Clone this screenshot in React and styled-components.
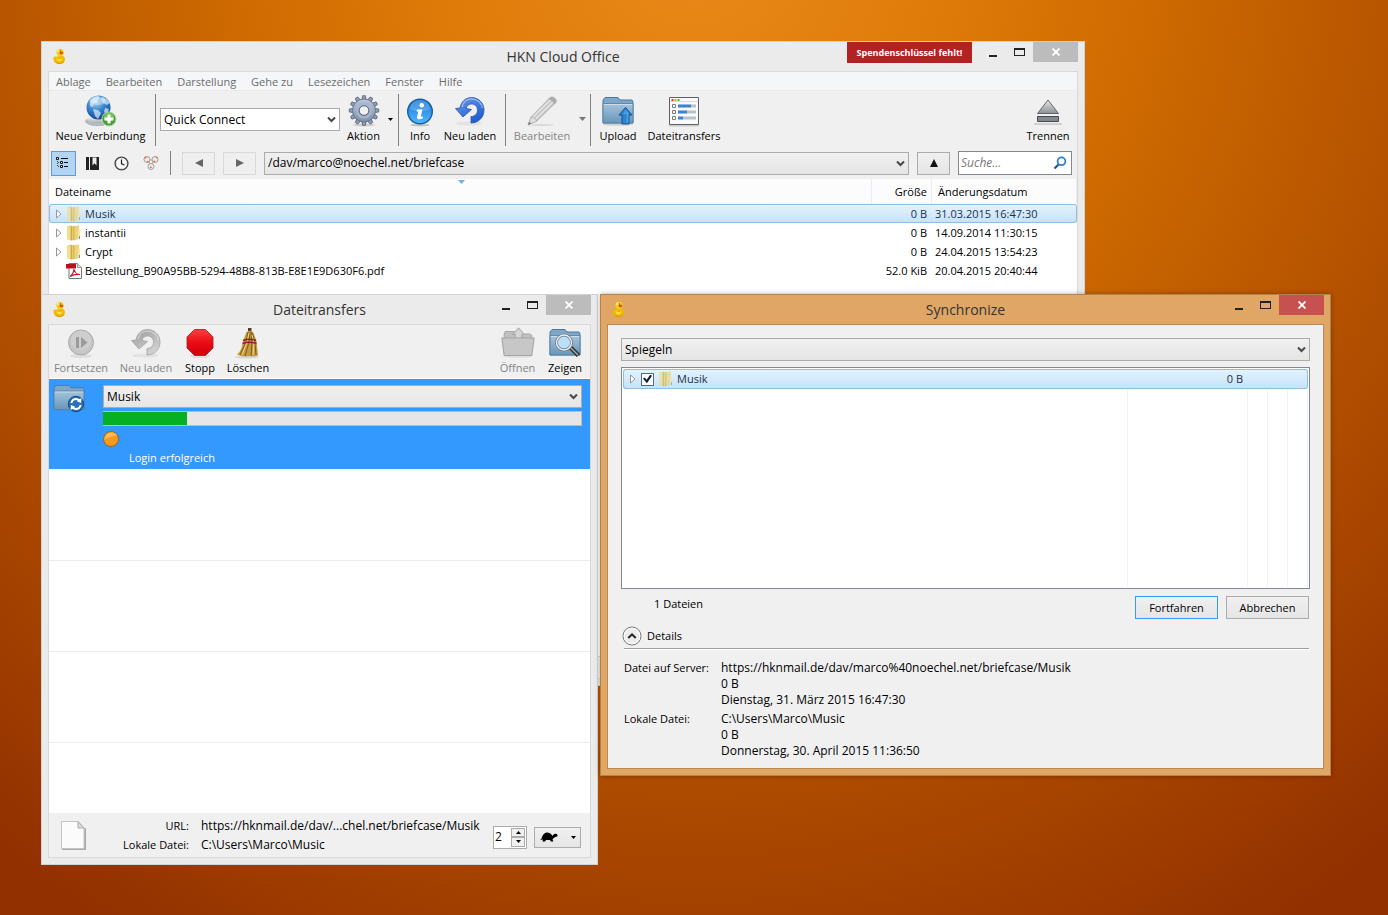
import React, { useState } from 'react'
import styled, { createGlobalStyle, css } from 'styled-components';

const GlobalStyle = createGlobalStyle`
  * {
    box-sizing: border-box;
  }
  html, body, #root {
    height: 100%;
    margin: 0;
  }
  body, button, input, select {
    font-family: 'Open Sans', 'Noto Sans', sans-serif;
    font-size: 12px;
    line-height: 16px;
    color: #000;
  }
  svg {
    display: block;
    flex: none;
  }
`

const Desktop = styled.main`
  position: relative;
  min-height: 100%;
  overflow: hidden;
  background: radial-gradient(ellipse 1100px 1160px at 50% -6%, #ea8a1a 0%, #de7a08 24%, #cd6900 43%, #b25000 68%, #923000 100%);
`

/* ---- window frame ---- */

const WindowFrame = styled.section`
  position: absolute;
  display: flex;
  flex-direction: column;
  padding: 0 6px 6px;
  background: ${props => props.$active ? '#e0a665' : '#ebebeb'};
  border: 1px solid ${props => props.$active ? '#b5834a' : '#d2d2d2'};
  box-shadow: ${props => props.$active ? '0 0 5px rgba(0, 0, 0, .3)' : 'none'};
`;

const MainFrame = styled(WindowFrame)`
  top: 41px;
  left: 41px;
  right: 303px;
  min-height: 645px;
`

const TransferFrame = styled(WindowFrame)`
  top: 294px;
  left: 41px;
  width: 557px;
  bottom: 50px;
`

const SyncFrame = styled(WindowFrame)`
  top: 294px;
  left: 600px;
  right: 57px;
`

const TitleBar = styled.header`
  display: grid;
  grid-template-columns: 1fr auto 1fr;
  height: 29px;
`

const TitleIcon = styled.div`
  padding: 6px 4px;
`

const Title = styled.h1`
  margin: 0;
  font-size: 14px;
  line-height: 29px;
  font-weight: 400;
  color: #333;
`

const Caption = styled.div`
  display: flex;
  justify-content: flex-end;
  align-items: flex-start;
`

const KeyNotice = styled.button`
  width: 125px;
  height: 21px;
  padding: 0;
  margin-right: 7px;
  border: 0;
  background: #b22222;
  color: #fff;
  font-size: 9px;
  font-weight: 700;
`

const CaptionButton = styled.button`
  display: flex;
  align-items: center;
  justify-content: center;
  width: 27px;
  height: 21px;
  padding: 0;
  border: 0;
  background: transparent;
`

const CloseButton = styled(CaptionButton)`
  width: 45px;
  height: 20px;
  background: ${props => props.$active ? '#c75050' : '#bcbcbc'};
`

const Content = styled.div`
  flex: 1;
  display: flex;
  flex-direction: column;
  min-height: 0;
  background: #f0f0f0;
  border: 1px solid ${props => props.$active ? '#b98a52' : '#d9d9d9'};
`

/* ---- shared controls ---- */

const ComboBox = styled.div`
  display: grid;
  flex: ${props => props.$width ? 'none' : '1'};
  width: ${props => props.$width || 'auto'};
  min-width: 0;
  height: 23px;
  align-items: center;
  > * {
    grid-area: 1 / 1;
  }
  > svg {
    justify-self: end;
    margin-right: 4px;
    pointer-events: none;
  }
  select {
    width: 100%;
    height: 23px;
    padding: 0 20px 0 3px;
    appearance: none;
    border: 1px solid #acacac;
    border-radius: 0;
    background: ${props => props.$white ? '#fff' : 'linear-gradient(#f0f0f0, #e5e5e5)'};
  }
`

const PushButton = styled.button`
  display: flex;
  align-items: center;
  justify-content: center;
  width: ${props => props.$width};
  height: 23px;
  padding: 0;
  border: 1px solid ${props => props.$primary ? '#3399ff' : '#acacac'};
  background: linear-gradient(#f0f0f0, #e5e5e5);
  font-size: 11px;
  &:disabled {
    border-color: #d9d9d9;
    background: #efefef;
  }
`

const ToolButton = styled.button`
  display: flex;
  flex-direction: column;
  align-items: center;
  gap: 1px;
  width: ${props => props.$width};
  padding: 1px 0 0;
  border: 0;
  background: transparent;
  font-size: 11px;
  white-space: nowrap;
  span {
    margin: 0 -10px;
  }
  &:disabled {
    color: #838383;
  }
`

const DropButton = styled.button`
  display: flex;
  align-items: center;
  justify-content: center;
  width: 16px;
  height: 50px;
  padding: 0;
  border: 0;
  background: transparent;
`

const Spacer = styled.div`
  flex: 1;
`

const Divider = styled.div`
  width: 1px;
  height: ${props => props.$height};
  background: #808080;
  margin: ${props => props.$margin};
`

/* ---- browser window ---- */

const MenuBar = styled.nav`
  display: flex;
  gap: 15px;
  height: 19px;
  padding: 0 7px;
  background: #f5f6f7;
  border-bottom: 1px solid #e8e9ea;
  button {
    padding: 0;
    border: 0;
    background: transparent;
    font-size: 11px;
    line-height: 20px;
    color: #6d6d6d;
  }
`

const ToolBar = styled.div`
  display: flex;
  align-items: flex-start;
  height: 59px;
  padding: 3px 0 0 1px;
`

const QuickConnect = styled.div`
  padding: 14px 5px 0 0;
`

const NavBar = styled.div`
  display: flex;
  align-items: center;
  height: 29px;
  padding: 0 5px 3px 2px;
`

const ViewButton = styled.button`
  display: flex;
  align-items: center;
  justify-content: center;
  width: 25px;
  height: 25px;
  margin-right: 4px;
  padding: 0;
  border: 1px solid ${props => props.$on ? '#569de5' : 'transparent'};
  background: ${props => props.$on ? '#b4d5f2' : 'transparent'};
`

const NavGroup = styled.div`
  display: flex;
  flex: ${props => props.$grow ? '1' : 'none'};
  align-items: center;
  gap: 8px;
`

const SearchField = styled.label`
  display: flex;
  align-items: center;
  width: 114px;
  height: 24px;
  padding: 0 4px 0 2px;
  border: 1px solid #828790;
  background: #fff;
  input {
    flex: 1;
    min-width: 0;
    padding: 0;
    border: 0;
    outline: 0;
  }
  input::placeholder {
    color: #7a7a7a;
    font-style: italic;
  }
`

const ListArea = styled.div`
  flex: 1;
  display: flex;
  min-height: 470px;
  background: #fff;
`

const selectedCell = css`
  background: linear-gradient(#e4f2fb, #c5e3fc);
  border-top: 1px solid #8fbfe2;
  border-bottom: 1px solid #8fbfe2;
  color: #1f2f45;
  &:first-child {
    border-left: 1px solid #8fbfe2;
    border-radius: 3px 0 0 3px;
  }
  &:last-child {
    border-right: 1px solid #8fbfe2;
    border-radius: 0 3px 3px 0;
  }
`

const FileTable = styled.table`
  width: 100%;
  height: 100%;
  table-layout: fixed;
  border-collapse: separate;
  border-spacing: 0;
  font-size: 11px;
  th, td {
    padding: 0;
    text-align: left;
    font-weight: 400;
    white-space: nowrap;
  }
`

const HeadCell = styled.th`
  height: 25px;
  background: #fcfcfc;
  border-right: 1px solid #e5eef8;
`

const HeadLabel = styled.div`
  display: flex;
  flex-direction: column;
  justify-content: center;
  height: 25px;
  padding: 0 4px 0 6px;
  text-align: ${props => props.$align || 'left'};
`

const SortMark = styled.span`
  display: block;
  align-self: center;
  height: 0;
  svg {
    position: relative;
    top: -4px;
  }
`

const Cell = styled.td`
  height: ${props => props.$tall ? '20px' : '19px'};
  &:first-child {
    border-left: 1px solid transparent;
  }
  ${props => props.$selected && selectedCell}
`

const CellBody = styled.div`
  display: flex;
  align-items: center;
  gap: 3px;
  height: 16px;
  padding: ${props => props.$pad || '0 4px 0 5px'};
  justify-content: ${props => props.$align || 'flex-start'};
`

const FillCell = styled.td`
  border-right: 1px solid #eaf2fb;
`

const StatusBar = styled.footer`
  height: 22px;
  border-top: 1px solid #d7d7d7;
`

/* ---- transfer window ---- */

const TransferTools = styled.div`
  display: flex;
  align-items: flex-start;
  height: 54px;
  padding: 1px 0 0;
  border-bottom: 1px solid #fff;
`

const TransferList = styled.ul`
  flex: 1;
  margin: 0;
  padding: 0;
  overflow: hidden;
  list-style: none;
  background: #fff;
`

const TransferItem = styled.li`
  display: grid;
  grid-template-columns: 46px 1fr;
  column-gap: 8px;
  height: 91px;
  padding: 6px 8px 0 0;
  background: ${props => props.$active ? '#3399ff' : '#fff'};
  border-bottom: 1px solid ${props => props.$active ? '#fff' : '#ececec'};
  > svg {
    margin-left: 4px;
  }
`

const TransferBody = styled.div`
  display: flex;
  flex-direction: column;
  align-items: stretch;
`

const Progress = styled.div`
  height: 15px;
  margin: 3px 0 5px;
  border: 1px solid #bcbcbc;
  border-left: 0;
  background: #e6e6e6;
`

const ProgressBar = styled.div`
  height: 100%;
  background: #06b025;
`

const TransferState = styled.p`
  margin: 3px 0 0 26px;
  font-size: 11px;
  color: #fff;
`

const TransferFooter = styled.footer`
  display: flex;
  align-items: center;
  height: 44px;
  padding: 0 9px 0 12px;
`

const FooterInfo = styled.dl`
  flex: 1;
  display: grid;
  grid-template-columns: 103px 1fr;
  column-gap: 12px;
  margin: 0;
  line-height: 19px;
  white-space: nowrap;
  dt {
    font-size: 11px;
    text-align: right;
  }
  dd {
    margin: 0;
  }
`

const Spinner = styled.div`
  display: flex;
  width: 34px;
  height: 23px;
  margin: 4px 7px 0 0;
  padding: 1px;
  border: 1px solid #acacac;
  background: #fff;
  input {
    flex: 1;
    min-width: 0;
    padding: 0;
    border: 0;
    outline: 0;
    appearance: textfield;
  }
  div {
    display: flex;
    flex-direction: column;
    width: 14px;
  }
  button {
    flex: 1;
    display: flex;
    align-items: center;
    justify-content: center;
    padding: 0;
    border: 1px solid #acacac;
    background: #f0f0f0;
  }
`

const SpeedButton = styled(PushButton)`
  justify-content: space-between;
  height: 21px;
  margin-top: 4px;
  padding: 0 4px 0 5px;
`

/* ---- synchronize window ---- */

const SyncBody = styled.div`
  display: flex;
  flex-direction: column;
  padding: 13px 13px 10px;
`

const SyncTree = styled.div`
  height: 222px;
  margin-top: 6px;
  padding: 1px;
  border: 1px solid #828790;
  background: #fff;
`

const CheckBox = styled.input`
  display: grid;
  place-content: center;
  width: 13px;
  height: 13px;
  margin: 0 1px;
  appearance: none;
  border: 1px solid #5c6874;
  background: #fff;
  &:checked::after {
    content: '';
    width: 9px;
    height: 9px;
    background: #0e2236;
    clip-path: polygon(0 45%, 18% 32%, 40% 58%, 80% 2%, 100% 14%, 44% 96%);
  }
`

const SyncActions = styled.div`
  display: flex;
  gap: 8px;
  padding: 7px 1px 0 33px;
  font-size: 11px;
  p {
    flex: 1;
    margin: 0;
  }
`

const DetailsToggle = styled.button`
  display: flex;
  align-items: center;
  gap: 5px;
  margin-top: 5px;
  padding: 0 0 0 1px;
  height: 24px;
  border: 0;
  background: transparent;
  font-size: 11px;
`

const Rule = styled.hr`
  margin: 0 1px 10px 3px;
  border: 0;
  border-top: 1px solid #a0a0a0;
  border-bottom: 1px solid #fff;
`

const DetailsList = styled.dl`
  display: grid;
  grid-template-columns: 85px 1fr;
  gap: 4px 12px;
  margin: 0 0 0 3px;
  dt {
    font-size: 11px;
    white-space: nowrap;
  }
  dd {
    margin: 0;
  }
  p {
    margin: 0;
    line-height: 16px;
  }
  p:last-child {
    line-height: 15px;
  }
`

/* ---- icons ---- */

const Duck = () => (
  <svg width="16" height="16" viewBox="0 0 16 16">
    <path d="M2 8.500c1.200.300 2.200.500 3.300.100L9.500 7.500c2.500.300 3.500 1.800 3.400 4C12.800 14.500 10.500 15.700 7.300 15.700 3.900 15.700 2 14.300 1.600 12c-.200-1.500-.100-2.700.400-3.500z" fill="#f3b900" />
    <path d="M4.500 10c1.600 1.600 4 1.500 6 .2-.3 2.100-1.800 3.200-3.600 3.100C5.500 13.200 4.600 12 4.500 10z" fill="#fbe14a" />
    <circle cx="8" cy="4.400" r="3.600" fill="#f9cf17" />
    <path d="M3 13.500c2 2 7 2 9.300-.3-.8 2-2.700 2.600-5 2.600-2 0-3.500-.8-4.300-2.300z" fill="#d48c00" />
    <ellipse cx="6.800" cy="2.800" rx="1.800" ry="1.300" fill="#fdec7c" />
    <path d="M7.500 4.300 10 3.600l1.500 1.200-1.400 1.600-2.400-.5z" fill="#e8481c" />
    <circle cx="8.300" cy="3" r=".7" fill="#5b3a00" />
  </svg>
)

const Globe = () => (
  <svg width="32" height="32" viewBox="0 0 32 32">
    <defs>
      <radialGradient id="globe" cx=".4" cy=".25" r=".8">
        <stop offset="0" stopColor="#b8dcf5" /><stop offset=".45" stopColor="#3f8ad0" /><stop offset="1" stopColor="#0a3f8f" />
      </radialGradient>
      <linearGradient id="stand" x2="0" y2="1">
        <stop offset="0" stopColor="#fafafa" /><stop offset="1" stopColor="#8b9094" />
      </linearGradient>
    </defs>
    <ellipse cx="13" cy="26" rx="12.500" ry="5" fill="url(#stand)" />
    <path d="M1 24c4 5 17 6 23 1l1 2c-5 5-20 6-25 0z" fill="#b5babe" />
    <circle cx="13.500" cy="12.500" r="12" fill="url(#globe)" />
    <path d="M5 6c2-3 5-4.500 8-5l2 2-3 2 1 2-4 1-1 4-3-1zM17 2c4 1 6 3 8 6l-3 2-4-2-2-3zM8 14l5 1 3 3-3 6-3-3zM20 13l4 1-2 6-3-3z" fill="#dceefa" opacity=".7" />
    <ellipse cx="13" cy="6" rx="8" ry="4" fill="#fff" opacity=".3" />
    <circle cx="24" cy="24" r="7" fill="#459c35" stroke="#b3ddb0" />
    <circle cx="24" cy="22" r="5" fill="#8bca70" opacity=".7" />
    <path d="M24 19.500v9M19.500 24h9" stroke="#fff" strokeWidth="3" />
  </svg>
)

const Gear = () => (
  <svg width="32" height="32" viewBox="0 0 32 32">
    <defs>
      <linearGradient id="gear" x2="0" y2="1">
        <stop offset="0" stopColor="#b9c6db" /><stop offset="1" stopColor="#8090ab" />
      </linearGradient>
    </defs>
    <ellipse cx="16" cy="30" rx="11" ry="1.500" fill="#ccc" />
    <g fill="#8f9db6" stroke="#48566d" strokeWidth=".7">
      {[0, 30, 60, 90, 120, 150, 180, 210, 240, 270, 300, 330].map(a => (
        <path key={a} d="M13.800 5 14.600.700h2.800L18.200 5z" transform={`rotate(${a} 16 15.500)`} />
      ))}
    </g>
    <circle cx="16" cy="15.500" r="11.500" fill="url(#gear)" stroke="#5b6a83" strokeWidth=".8" />
    <circle cx="16" cy="15.500" r="7" fill="none" stroke="#a7b5cd" strokeWidth="2" />
    <circle cx="16" cy="15.500" r="4.800" fill="#f0f0f0" stroke="#56637a" />
  </svg>
)

const Info = () => (
  <svg width="32" height="32" viewBox="0 0 32 32">
    <defs>
      <linearGradient id="info" x2="0" y2="1">
        <stop offset="0" stopColor="#1877d3" /><stop offset="1" stopColor="#51b6fd" />
      </linearGradient>
    </defs>
    <ellipse cx="16" cy="30" rx="10" ry="1.500" fill="#c4c4c4" />
    <circle cx="16" cy="16.500" r="12.300" fill="url(#info)" stroke="#175da5" strokeWidth="1.400" />
    <path d="M6 14c1-6 5-9 10-9s9 3 10 9c-6 3-14 3-20 0z" fill="#fff" opacity=".18" />
    <circle cx="17.700" cy="10.300" r="2.200" fill="#fff" />
    <path d="M13 14.500h5.500l-1.800 7.200 2.300-.2-.5 2c-2.500 1.200-6 1.400-5.400-1.700l1.200-5.300h-1.800z" fill="#fff" />
  </svg>
)

const Reload = ({ gray }) => (
  <svg width="32" height="32" viewBox="0 0 32 32">
    <defs>
      <linearGradient id={gray ? 'reloadGray' : 'reload'} x2=".6" y2="1">
        <stop offset="0" stopColor={gray ? '#999' : '#6a9aea'} /><stop offset="1" stopColor={gray ? '#d2d2d2' : '#1f5fd0'} />
      </linearGradient>
    </defs>
    <ellipse cx="15" cy="28.500" rx="13" ry="2" fill="#e2e2e2" />
    <path d="M1.500 13.500 6 13C7 7 11.500 2.500 17.500 2.500 24.500 2.500 30 8 30 15c0 7.500-5.500 13-13 13v-6.500c4 0 6.500-2.700 6.500-6.300 0-3.700-2.600-6.200-6-6.200-2.800 0-4.700 1.500-5.300 4.500l5.300 1L9 22z"
      fill={`url(#${gray ? 'reloadGray' : 'reload'})`} stroke={gray ? '#a2a2a2' : '#2654ae'} strokeWidth=".8" />
    <path d="M8 12c1-5 5-8 9.500-8C23 4 28 8 28.500 13" fill="none" stroke="#fff" opacity=".4" strokeWidth="1.500" />
  </svg>
)

const Pencil = () => (
  <svg width="32" height="32" viewBox="0 0 32 32">
    <ellipse cx="16" cy="30" rx="12" ry="1" fill="#dadada" />
    <path d="M2 30 5 22 24 2.500c2.500-2 7.500 1.500 6 5L11 26z" fill="#c6c6c6" stroke="#aaa" strokeWidth=".7" />
    <path d="M7 22 26 3.500M9 24.500 29 5" stroke="#e6e6e6" strokeWidth="1.500" />
    <path d="M22 4.500c3 0 5.500 2 6 5l2-2c1.500-3.500-3.500-7-6-5z" fill="#aaa" />
    <path d="M5 22c3 .5 5 2 6 4l-9 4z" fill="#dedede" stroke="#aaa" strokeWidth=".6" />
    <path d="m2 30 1.200-3.200 2.200 1.700z" fill="#777" />
  </svg>
)

const FolderShape = ({ id }) => (
  <>
    <defs>
      <linearGradient id={id} x2="0" y2="1">
        <stop offset="0" stopColor="#a5c4dc" /><stop offset="1" stopColor="#6796ba" />
      </linearGradient>
    </defs>
    <path d="M1 28V5l2-2.500h13L18 5h12l1 2v21z" fill="#7ea7c7" stroke="#4c789e" />
    <path d="M1 8.500h30V28H1z" fill={`url(#${id})`} stroke="#5685ab" />
    <path d="M1.800 9.400h28.400" stroke="#fff" opacity=".5" />
  </>
)

const UploadFolder = () => (
  <svg width="32" height="32" viewBox="0 0 32 32">
    <ellipse cx="16" cy="29.500" rx="15" ry="1.500" fill="#d2d2d2" />
    <FolderShape id="uploadFolder" />
    <path d="m23.500 12.500 6.500 7.500h-3v9h-7v-9h-3z" fill="#2c83d0" stroke="#154f8d" />
    <path d="m23.500 14.500 3 3.500v10h-2v-9h-3.500z" fill="#5fb0ee" opacity=".6" />
  </svg>
)

const TransfersIcon = () => (
  <svg width="32" height="32" viewBox="0 0 32 32">
    <path d="M1 30.500h30" stroke="#ccc" strokeWidth="2" />
    <path d="M1.500 2.500h29v27h-29z" fill="#fafafa" stroke="#5c6267" />
    <path d="M2 6.500h28" stroke="#d8d8d8" />
    <path d="M3.500 5h2" stroke="#d8362a" strokeWidth="2" />
    <path d="M6.500 5h2" stroke="#e79a23" strokeWidth="2" />
    <path d="M9.500 5h2" stroke="#58a93c" strokeWidth="2" />
    {[9, 15, 21].map((y, i) => (
      <g key={y}>
        <path d={`M4.500 ${y + .5}h3v3h-3z`} fill="#fff" stroke="#777c82" />
        <path d={`M10 ${y + 2}h18`} stroke="#b9c1ca" strokeWidth="4" />
        <path d={`M10 ${y + 2}h${[13, 9, 5][i]}`} stroke="#3f82cf" strokeWidth="4" />
        <path d={`M10 ${y + .5}h18M10 ${y + 3.5}h18`} stroke="#fff" opacity=".45" />
      </g>
    ))}
  </svg>
)

const Eject = () => (
  <svg width="32" height="32" viewBox="0 0 32 32">
    <defs>
      <linearGradient id="eject" x2="0" y2="1">
        <stop offset="0" stopColor="#e8e8ea" /><stop offset="1" stopColor="#8d9095" />
      </linearGradient>
    </defs>
    <path d="M2 29h28" stroke="#d0d0d0" strokeWidth="2" />
    <path d="M16 5 26.500 18.500h-21z" fill="url(#eject)" stroke="#55585e" strokeWidth=".9" />
    <path d="M5.500 21.500h21v5h-21z" fill="#85888e" stroke="#45484e" />
  </svg>
)

const Chevron = () => (
  <svg width="9" height="7" viewBox="0 0 9 7">
    <path d="m1 1.500 3.500 3.500L8 1.500" fill="none" stroke="#484848" strokeWidth="2" />
  </svg>
)

const Caret = ({ up, wide, color = '#000' }) => (
  <svg width={wide ? 7 : 5} height={wide ? 4 : 3} viewBox="0 0 5 3" preserveAspectRatio="none">
    <path d={up ? 'M0 3 2.500 0 5 3z' : 'M0 0h5L2.500 3z'} fill={color} />
  </svg>
)

const Triangle = ({ dir, color }) => (
  <svg width="10" height="10" viewBox="0 0 10 10">
    <path d={{ left: 'M9 1v8L1 5z', right: 'M1 1v8l8-4z', up: 'M1 9h8L5 1z' }[dir]} fill={color} />
  </svg>
)

const OutlineIcon = () => (
  <svg width="15" height="14" viewBox="0 0 15 14">
    <path d="M1.500 3v8M2 6.500h2M2 10.500h2" fill="none" stroke="#444" strokeDasharray="1 1" />
    <path d="M.500 1.500h2v2h-2zM4.500 5.500h2v2h-2zM4.500 9.500h2v2h-2z" fill="#fff" stroke="#111" />
    <path d="M5 2.500h7M8 6.500h4M8 10.500h4" stroke="#111" />
  </svg>
)

const BookmarkIcon = () => (
  <svg width="15" height="15" viewBox="0 0 15 15">
    <path d="M1 1h3v13H1zM5 1h9v13H5z" fill="#222" />
    <path d="M7.500 1.500h4v8l-2-2.300-2 2.300z" fill="#eee" />
  </svg>
)

const ClockIcon = () => (
  <svg width="15" height="15" viewBox="0 0 15 15">
    <circle cx="7.500" cy="7.500" r="6.400" fill="#f7f7f7" stroke="#444" strokeWidth="1.400" />
    <path d="M7.500 3.500v4.300l3 1.200" fill="none" stroke="#222" strokeWidth="1.200" />
    <path d="M7.500 1.500v1.200M7.500 12.300v1.200M1.500 7.500h1.200M12.300 7.500h1.200" stroke="#999" />
  </svg>
)

const BonjourIcon = () => (
  <svg width="16" height="16" viewBox="0 0 16 16">
    <g fill="#ececec" stroke="#a79e98">
      <circle cx="4" cy="4.500" r="3" />
      <circle cx="12" cy="4.500" r="3" />
      <circle cx="8" cy="11.500" r="3" />
      <path d="m6 7 1 2M10 7 9 9M6.500 5h3" fill="none" />
    </g>
    <path d="m1 2 2.500-.5L3 4zM10 6l2.500-.5-1 2zM6.500 13l1.500-2 1 2z" fill="#ee6b24" />
    <path d="m13 2 1.500 1M4 6.500l1.500.5" stroke="#ee6b24" strokeWidth="1.500" />
  </svg>
)

const Magnifier = () => (
  <svg width="14" height="14" viewBox="0 0 14 14">
    <path d="M1.500 12.500 5.500 8.500" stroke="#2a4c9e" strokeWidth="2.200" />
    <circle cx="8.500" cy="5.300" r="3.900" fill="#fff" stroke="#2f7fcd" strokeWidth="1.800" />
  </svg>
)

const Expander = () => (
  <svg width="8" height="10" viewBox="0 0 8 10">
    <path d="M1.500 1v8L6 5z" fill="#fff" stroke="#979797" />
  </svg>
)

const YellowFolder = ({ dim }) => (
  <svg width="16" height="16" viewBox="0 0 16 16" opacity={dim ? .7 : 1}>
    <path d="M1 1.500 5.500.500 8 2v13l-3 .5-4-1.500z" fill="#e6cc70" />
    <path d="M1 1.500 4 2.500V15l-3-1z" fill="#f2df8f" />
    <path d="M5 1.500 6 1v14l-1 .500z" fill="#cdaa4a" />
    <path d="M7 1 13 .500V14l-5.500 1.500H7z" fill="#ecd47a" />
    <path d="M7 1h1.500v14H7z" fill="#d9b95a" />
    <path d="M12 4.500h2v9.500l-2 .500z" fill="#f5e6a0" />
    <path d="M13.500 11v3" stroke="#4aa3df" />
  </svg>
)

const PdfIcon = () => (
  <svg width="16" height="16" viewBox="0 0 16 16">
    <path d="M3 .500h8.500l4 4v11H3z" fill="#fff" stroke="#777" />
    <path d="M11.500.500v4h4" fill="#ddd" stroke="#999" />
    <path d="M0 1h10v4.500H0z" fill="#b5121b" />
    <path d="M4 13.500c2-1 4.200-5 4-7.500.500 3 3 5.500 6 5.500-3-.500-7 .200-10 2z" fill="none" stroke="#c11a22" strokeWidth="1.200" />
  </svg>
)

const PlayPause = () => (
  <svg width="32" height="32" viewBox="0 0 32 32">
    <ellipse cx="16" cy="29" rx="11" ry="2" fill="#ddd" />
    <circle cx="16" cy="15.500" r="12.500" fill="#c6c6c6" stroke="#a8a8a8" />
    <circle cx="16" cy="13.500" r="10" fill="#d3d3d3" opacity=".6" />
    <path d="M11 10h3v11h-3zM16 10v11l6.500-5.500z" fill="#9b9b9b" />
  </svg>
)

const StopSign = () => (
  <svg width="32" height="32" viewBox="0 0 32 32">
    <defs>
      <linearGradient id="stop" x2="0" y2="1">
        <stop offset="0" stopColor="#ff4040" /><stop offset=".5" stopColor="#e90c14" /><stop offset="1" stopColor="#cf0009" />
      </linearGradient>
    </defs>
    <ellipse cx="16" cy="29" rx="10" ry="2" fill="#ddd" />
    <path d="M10.500 2.500h11l7.500 7.500v11l-7.500 7.500h-11L3 21V10z" fill="url(#stop)" stroke="#a8161a" strokeWidth=".8" />
  </svg>
)

const Broom = () => (
  <svg width="32" height="32" viewBox="0 0 32 32">
    <ellipse cx="15" cy="30" rx="12" ry="1.500" fill="#d5d5d5" />
    <path d="M16 1h3.500v6H16z" fill="#5a3b22" />
    <path d="M14 6c2-3 6-3 7.500 0l3 8 1.500 14.500c-3 1-6 1-8 .5-4 1-9 .5-13-1.500 4-3 5-8 6-13.500z" fill="#c69a40" />
    <path d="M16 5 14 15 8 28M18 5l-1 10-4 14M19 5l1 11-1 13M20.500 6 23 16l1 12" fill="none" stroke="#76541b" strokeWidth=".9" />
    <path d="M17 6l-2 9-5 13M20 8l2 8-1 12" fill="none" stroke="#efd58a" />
    <path d="M11 13.500c4-1.500 9-1.500 13 0M10.500 16.500c4-1.500 10-1.500 14 0" fill="none" stroke="#8f2323" strokeWidth="1.500" />
  </svg>
)

const OpenFolder = () => (
  <svg width="34" height="32" viewBox="0 0 32 32" preserveAspectRatio="none">
    <ellipse cx="16" cy="29.500" rx="13" ry="1.500" fill="#ddd" />
    <path d="M3 12V7l1-2.500h8L13 7h14l2 2v4z" fill="#c0c0c0" stroke="#aaa" />
    <path d="m16.500 1 5.500 6.500h-2.500V14h-6V7.500H11z" fill="#d6d6d6" stroke="#aaa" />
    <path d="M.8 11h30.400L29 28.500H3z" fill="#c7c7c7" stroke="#a4a4a4" />
  </svg>
)

const ShowFolder = () => (
  <svg width="32" height="32" viewBox="0 0 32 32">
    <FolderShape id="showFolder" />
    <path d="m20 19 9.500 9.500" stroke="#333" strokeWidth="4.500" />
    <path d="m20 19 9 9" stroke="#aaa" strokeWidth="1.500" />
    <circle cx="15" cy="15.500" r="7.500" fill="#b8e0f8" stroke="#6c747b" strokeWidth="2.800" />
    <circle cx="15" cy="15.500" r="7.500" fill="none" stroke="#e9edef" strokeWidth="1.500" />
  </svg>
)

const SyncFolder = () => (
  <svg width="32" height="28" viewBox="0 2 32 28">
    <g transform="scale(1 .95)">
      <FolderShape id="syncFolder" />
    </g>
    <circle cx="23" cy="21" r="7.700" fill="#2870b8" stroke="#184c87" />
    <path d="M18.300 20c.7-2.800 2.700-4 4.700-4 1.500 0 2.500.500 3.500 1.500M27.700 22c-.7 2.800-2.700 4-4.700 4-1.500 0-2.500-.500-3.500-1.500" fill="none" stroke="#fff" strokeWidth="2" />
    <path d="m28.500 15-.5 5-4.500-2zM17.500 27l.5-5 4.500 2z" fill="#fff" />
  </svg>
)

const StatusBall = () => (
  <svg width="16" height="16" viewBox="0 0 16 16">
    <circle cx="8" cy="8" r="7.500" fill="#f79a1e" stroke="#a3661b" />
    <path d="M1.500 9C2 4.500 5 1.500 8.500 1.500c2.500 0 4.500 1 5.500 3C10 5 5 6 1.500 9z" fill="#fcbd5b" />
  </svg>
)

const PaperIcon = () => (
  <svg width="25" height="29" viewBox="0 0 25 29">
    <path d="M1 28h23V7" fill="none" stroke="#aaa" strokeWidth="2" />
    <path d="M.500.500h16.500L23 7v20.500H.500z" fill="#fbfbfb" stroke="#c3c3c3" />
    <path d="M17 .500V7h6z" fill="#ddd" stroke="#aaa" />
  </svg>
)

const Turtle = () => (
  <svg width="18" height="10" viewBox="0 0 18 10">
    <path d="M0 8c1-.5 1.500-1 2-3 1-3 3-4.500 5-4.500 2.500 0 4.500 1.500 5.500 3.500l1-1.500c1-1 3.500-.8 4 .5.300 1.200-.5 2-2 2-1 0-1.500 1.500-3 2l.8 2.500h-2.500L10 8H6L5 9.500H2.500L3 7.500z" fill="#000" />
  </svg>
)

const UpDisc = () => (
  <svg width="20" height="20" viewBox="0 0 20 20">
    <circle cx="10" cy="10" r="9" fill="#ececec" stroke="#777" />
    <circle cx="10" cy="10" r="7.800" fill="none" stroke="#fff" />
    <path d="m6.300 12 3.700-3.700 3.700 3.700" fill="none" stroke="#222" strokeWidth="2" />
  </svg>
)

/* ---- building blocks ---- */

const WindowTitle = ({ title, active, children }) => (
  <TitleBar>
    <TitleIcon><Duck /></TitleIcon>
    <Title>{title}</Title>
    <Caption>
      {children}
      <CaptionButton aria-label="Minimieren">
        <svg width="8" height="15" viewBox="0 0 8 15"><path d="M0 10h8v2H0z" fill="#222" /></svg>
      </CaptionButton>
      <CaptionButton aria-label="Maximieren">
        <svg width="11" height="9" viewBox="0 0 11 9"><path d="M0 0h11v8H0zM1 2v5h9V2z" fill="#222" fillRule="evenodd" /></svg>
      </CaptionButton>
      <CloseButton $active={active} aria-label="Schließen">
        <svg width="8" height="8" viewBox="0 0 8 8"><path d="m.500.500 7 7M7.500.500l-7 7" stroke="#fff" strokeWidth="1.800" /></svg>
      </CloseButton>
    </Caption>
  </TitleBar>
)

const Combo = ({ label, options, ...rest }) => (
  <ComboBox {...rest}>
    <select aria-label={label}>
      {options.map(option => <option key={option}>{option}</option>)}
    </select>
    <Chevron />
  </ComboBox>
)

const Tool = ({ icon, label, width, disabled }) => (
  <ToolButton $width={width} disabled={disabled}>
    {icon}
    <span>{label}</span>
  </ToolButton>
)

const menus = ['Ablage', 'Bearbeiten', 'Darstellung', 'Gehe zu', 'Lesezeichen', 'Fenster', 'Hilfe']

const files = [
  { name: 'Musik', size: '0 B', date: '31.03.2015 16:47:30', folder: true },
  { name: 'instantii', size: '0 B', date: '14.09.2014 11:30:15', folder: true },
  { name: 'Crypt', size: '0 B', date: '24.04.2015 13:54:23', folder: true },
  { name: 'Bestellung_B90A95BB-5294-48B8-813B-E8E1E9D630F6.pdf', size: '52.0 KiB', date: '20.04.2015 20:40:44' },
]

const BrowserWindow = () => {
  const [selected, setSelected] = useState('Musik')
  return (
    <MainFrame>
      <WindowTitle title="HKN Cloud Office">
        <KeyNotice>Spendenschlüssel fehlt!</KeyNotice>
      </WindowTitle>
      <Content>
        <MenuBar>
          {menus.map(menu => <button key={menu}>{menu}</button>)}
        </MenuBar>
        <ToolBar>
          <Tool icon={<Globe />} label="Neue Verbindung" width="101px" />
          <Divider $height="52px" $margin="0 4px" />
          <QuickConnect>
            <Combo label="Quick Connect" options={['Quick Connect']} $width="180px" $white />
          </QuickConnect>
          <Tool icon={<Gear />} label="Aktion" width="37px" />
          <DropButton aria-label="Aktion Menü"><Caret /></DropButton>
          <Divider $height="52px" $margin="0 4px 0 0" />
          <Tool icon={<Info />} label="Info" width="34px" />
          <Tool icon={<Reload />} label="Neu laden" width="66px" />
          <Divider $height="52px" $margin="0 4px 0 2px" />
          <Tool icon={<Pencil />} label="Bearbeiten" width="64px" disabled />
          <DropButton aria-label="Bearbeiten Menü" disabled><Caret wide color="#777" /></DropButton>
          <Divider $height="52px" $margin="0 5px 0 0" />
          <Tool icon={<UploadFolder />} label="Upload" width="44px" />
          <Tool icon={<TransfersIcon />} label="Dateitransfers" width="88px" />
          <Spacer />
          <Tool icon={<Eject />} label="Trennen" width="58px" />
        </ToolBar>
        <NavBar>
          <ViewButton $on aria-label="Gliederung"><OutlineIcon /></ViewButton>
          <ViewButton aria-label="Lesezeichen"><BookmarkIcon /></ViewButton>
          <ViewButton aria-label="Verlauf"><ClockIcon /></ViewButton>
          <ViewButton aria-label="Bonjour"><BonjourIcon /></ViewButton>
          <Divider $height="24px" $margin="0 11px 0 3px" />
          <NavGroup $grow>
            <PushButton $width="33px" disabled aria-label="Zurück"><Triangle dir="left" color="#666" /></PushButton>
            <PushButton $width="33px" disabled aria-label="Vor"><Triangle dir="right" color="#666" /></PushButton>
            <Combo label="Pfad" options={['/dav/marco@noechel.net/briefcase']} />
            <PushButton $width="33px" aria-label="Übergeordneter Ordner"><Triangle dir="up" color="#111" /></PushButton>
            <SearchField>
              <input type="search" placeholder="Suche..." aria-label="Suche" />
              <Magnifier />
            </SearchField>
          </NavGroup>
        </NavBar>
        <ListArea>
          <FileTable>
            <colgroup><col /><col width="60" /><col width="145" /></colgroup>
            <thead>
              <tr>
                <HeadCell>
                  <HeadLabel>
                    <SortMark><svg width="7" height="4" viewBox="0 0 7 4"><path d="M0 0h7L3.500 4z" fill="#6cb4dc" /></svg></SortMark>
                    Dateiname
                  </HeadLabel>
                </HeadCell>
                <HeadCell><HeadLabel $align="right">Größe</HeadLabel></HeadCell>
                <HeadCell><HeadLabel>Änderungsdatum</HeadLabel></HeadCell>
              </tr>
            </thead>
            <tbody>
              {files.map(file => (
                <tr key={file.name} onClick={() => setSelected(file.name)}>
                  <Cell $selected={file.name === selected}>
                    <CellBody $pad={file.folder ? '0 0 0 5px' : '0 0 0 16px'}>
                      {file.folder && <Expander />}
                      {file.folder ? <YellowFolder dim={file.name === selected} /> : <PdfIcon />}
                      <span>{file.name}</span>
                    </CellBody>
                  </Cell>
                  <Cell $selected={file.name === selected}><CellBody $pad="0 5px 0 0" $align="flex-end">{file.size}</CellBody></Cell>
                  <Cell $selected={file.name === selected}><CellBody $pad="0 0 0 3px">{file.date}</CellBody></Cell>
                </tr>
              ))}
              <tr><FillCell /><FillCell /><FillCell /></tr>
            </tbody>
          </FileTable>
        </ListArea>
        <StatusBar />
      </Content>
    </MainFrame>
  )
}

const TransferWindow = () => {
  const [limit, setLimit] = useState(2)
  const progress = 17.5
  return (
    <TransferFrame>
      <WindowTitle title="Dateitransfers" />
      <Content>
        <TransferTools>
          <Tool icon={<PlayPause />} label="Fortsetzen" width="64px" disabled />
          <Tool icon={<Reload gray />} label="Neu laden" width="66px" disabled />
          <Tool icon={<StopSign />} label="Stopp" width="42px" />
          <Tool icon={<Broom />} label="Löschen" width="54px" />
          <Spacer />
          <Tool icon={<OpenFolder />} label="Öffnen" width="45px" disabled />
          <Tool icon={<ShowFolder />} label="Zeigen" width="50px" />
        </TransferTools>
        <TransferList>
          <TransferItem $active>
            <SyncFolder />
            <TransferBody>
              <Combo label="Transfer" options={['Musik']} $width="100%" />
              <Progress role="progressbar" aria-label="Fortschritt" aria-valuenow={progress}>
                <ProgressBar style={{ width: `${progress}%` }} />
              </Progress>
              <StatusBall />
              <TransferState>Login erfolgreich</TransferState>
            </TransferBody>
          </TransferItem>
          <TransferItem />
          <TransferItem />
          <TransferItem />
        </TransferList>
        <TransferFooter>
          <PaperIcon />
          <FooterInfo>
            <dt>URL:</dt>
            <dd>https://hknmail.de/dav/...chel.net/briefcase/Musik</dd>
            <dt>Lokale Datei:</dt>
            <dd>C:\Users\Marco\Music</dd>
          </FooterInfo>
          <Spinner>
            <input type="text" inputMode="numeric" aria-label="Maximale Transfers" value={limit} onChange={e => setLimit(Number(e.target.value) || 0)} />
            <div>
              <button aria-label="Mehr" onClick={() => setLimit(limit + 1)}><Caret up /></button>
              <button aria-label="Weniger" onClick={() => setLimit(Math.max(1, limit - 1))}><Caret /></button>
            </div>
          </Spinner>
          <SpeedButton $width="47px" aria-label="Bandbreite"><Turtle /><Caret /></SpeedButton>
        </TransferFooter>
      </Content>
    </TransferFrame>
  )
}

const SyncWindow = () => {
  const [open, setOpen] = useState(true)
  return (
    <SyncFrame $active>
      <WindowTitle title="Synchronize" active />
      <Content $active>
        <SyncBody>
          <Combo label="Aktion" options={['Spiegeln']} $width="100%" />
          <SyncTree>
            <FileTable>
              <colgroup><col /><col width="120" /><col width="20" /><col width="20" /><col width="20" /></colgroup>
              <tbody>
                <tr>
                  <Cell $selected $tall>
                    <CellBody $pad="0 0 0 5px">
                      <Expander />
                      <CheckBox type="checkbox" defaultChecked aria-label="Musik" />
                      <YellowFolder dim />
                      <span>Musik</span>
                    </CellBody>
                  </Cell>
                  <Cell $selected $tall><CellBody $pad="0 5px 0 0" $align="flex-end">0 B</CellBody></Cell>
                  <Cell $selected $tall />
                  <Cell $selected $tall />
                  <Cell $selected $tall />
                </tr>
                <tr><FillCell /><FillCell /><FillCell /><FillCell /><FillCell /></tr>
              </tbody>
            </FileTable>
          </SyncTree>
          <SyncActions>
            <p>1 Dateien</p>
            <PushButton $width="83px" $primary>Fortfahren</PushButton>
            <PushButton $width="83px">Abbrechen</PushButton>
          </SyncActions>
          <DetailsToggle aria-expanded={open} onClick={() => setOpen(!open)}>
            <UpDisc />
            Details
          </DetailsToggle>
          <Rule />
          {open && (
            <DetailsList>
              <dt>Datei auf Server:</dt>
              <dd>
                <p>https://hknmail.de/dav/marco%40noechel.net/briefcase/Musik</p>
                <p>0 B</p>
                <p>Dienstag, 31. März 2015 16:47:30</p>
              </dd>
              <dt>Lokale Datei:</dt>
              <dd>
                <p>C:\Users\Marco\Music</p>
                <p>0 B</p>
                <p>Donnerstag, 30. April 2015 11:36:50</p>
              </dd>
            </DetailsList>
          )}
        </SyncBody>
      </Content>
    </SyncFrame>
  )
}

export default function App() {
  return (
    <Desktop>
      <GlobalStyle />
      <BrowserWindow />
      <TransferWindow />
      <SyncWindow />
    </Desktop>
  )
}
